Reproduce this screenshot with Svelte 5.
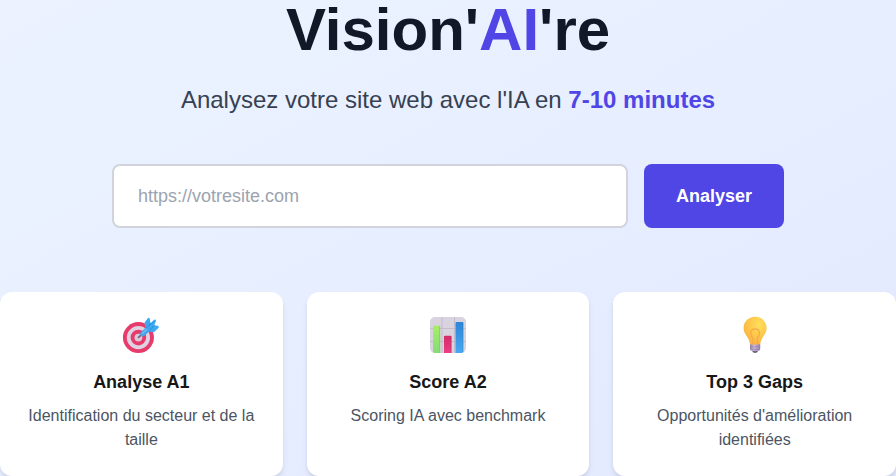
<script>
  const features = [
    { icon: 'target', title: 'Analyse A1', text: 'Identification du secteur et de la taille' },
    { icon: 'chart', title: 'Score A2', text: 'Scoring IA avec benchmark' },
    { icon: 'bulb', title: 'Top 3 Gaps', text: "Opportunités d'amélioration identifiées" }
  ];
  let url = $state('');
</script>

<main>
  <h1>Vision'<span>AI</span>'re</h1>
  <p class="lead">Analysez votre site web avec l'IA en <strong>7-10 minutes</strong></p>
  <form onsubmit={(e) => e.preventDefault()}>
    <input type="text" placeholder="https://votresite.com" bind:value={url} />
    <button type="submit">Analyser</button>
  </form>
  <section class="cards">
    {#each features as feature}
      <article>
        <div class="icon">
          {#if feature.icon === 'target'}
            <svg viewBox="0 0 40 40" width="40" height="40">
              <defs>
                <linearGradient id="dart" x1="0" y1="1" x2="1" y2="0">
                  <stop offset="0" stop-color="#4b9eea" /><stop offset="1" stop-color="#35b2f5" />
                </linearGradient>
              </defs>
              <circle cx="17.4" cy="21.6" r="15.5" fill="#e63b6b" />
              <circle cx="17.4" cy="21.6" r="11.6" fill="#e0d2e3" />
              <circle cx="17.4" cy="21.6" r="7.8" fill="#e63b6b" />
              <circle cx="17.4" cy="21.6" r="3.9" fill="#d9c8da" />
              <path d="M17.6 21.4 22 17" stroke="#72697c" stroke-width="1.8" stroke-linecap="round" />
              <path d="M19.6 16.6 24.5 11.7 23.6 7.4Q23.5 6.3 24.3 5.5L27 2.1Q28.4 1 28.8 2.7L29.6 7.2 33.1 3.8Q35.4 2.6 35 5L33.3 9.2 36.8 9.8Q38.8 10.5 37.4 11.9L33.7 15.4Q32.5 16.5 31 16L28.2 15.5 23.5 19.8Q21.5 21.4 19.8 19.7 18.2 18.2 19.6 16.6Z" fill="url(#dart)" />
              <path d="M25 12 33.5 5M28.5 14.7 33.2 9.2M28 9 29.3 7.2" stroke="#288cd8" stroke-width=".9" fill="none" />
              <path d="M21.2 17.6 25.5 13.5" stroke="#69c4fa" stroke-width="1.3" stroke-linecap="round" />
            </svg>
          {:else if feature.icon === 'chart'}
            <svg viewBox="0 0 40 40" width="40" height="40">
              <defs>
                <linearGradient id="green" x1="0" y1="0" x2="0" y2="1">
                  <stop offset="0" stop-color="#a5ef61" /><stop offset="1" stop-color="#85dc78" />
                </linearGradient>
                <linearGradient id="blue" x1="0" y1="0" x2="0" y2="1">
                  <stop offset="0" stop-color="#2c86d8" /><stop offset="1" stop-color="#48a9f4" />
                </linearGradient>
                <linearGradient id="pink" x1="0" y1="0" x2="0" y2="1">
                  <stop offset="0" stop-color="#d22c68" /><stop offset="1" stop-color="#ee3f83" />
                </linearGradient>
                <clipPath id="panel"><rect x="2" y="1" width="36" height="36" rx="5" /></clipPath>
              </defs>
              <g clip-path="url(#panel)">
                <rect x="2" y="1" width="36" height="36" fill="#d9d2df" />
                <path d="M2 12.5H38M2 25.5H38M14 1V38M26.5 1V38" stroke="#c4bccc" stroke-width="1" />
                <rect x="5" y="9.8" width="7" height="28" rx="1" fill="url(#green)" />
                <rect x="16" y="19.8" width="7.5" height="18" rx="1" fill="url(#pink)" />
                <rect x="27.5" y="6" width="7.8" height="32" rx="1" fill="url(#blue)" />
                <path d="M11.7 10.2V38" stroke="#75c957" stroke-width=".7" />
                <path d="M23.2 20.2V38M35 6.5V38" stroke="#374778" stroke-opacity=".3" stroke-width=".6" />
              </g>
            </svg>
          {:else}
            <svg viewBox="0 0 40 40" width="40" height="40">
              <defs>
                <radialGradient id="glass" cx=".66" cy=".28" r=".8">
                  <stop offset="0" stop-color="#ffdf5c" /><stop offset=".5" stop-color="#fdc84a" /><stop offset="1" stop-color="#f8b045" />
                </radialGradient>
                <linearGradient id="base">
                  <stop offset="0" stop-color="#9482a5" /><stop offset=".4" stop-color="#cbbbd8" /><stop offset="1" stop-color="#927daa" />
                </linearGradient>
              </defs>
              <path d="M16.8 34.5H23.4L22 36.6Q20 37.5 18.1 36.6Z" fill="#75617f" />
              <path d="M15 27.5H25.2V32.8Q25.2 35 22.8 35H17.5Q15 35 15 32.8Z" fill="url(#base)" />
              <path d="M15 30.4Q20 31.8 25.2 30.4M15.2 33Q20 34.4 25 33" stroke="#9985b0" stroke-width=".8" fill="none" />
              <path d="M20.1 .8C13.4 .8 8.6 5.8 8.6 12C8.6 17.6 12.4 20 14 24.2L14.8 27.2Q15.2 28.6 16.7 28.6H23.5Q25 28.6 25.4 27.2L26.2 24.2C27.8 20 31.6 17.6 31.6 12C31.6 5.8 26.8 .8 20.1 .8Z" fill="url(#glass)" />
              <path d="M17.8 28.3V22C14.1 18 15.5 12.9 20 12.9S26.3 18 22.4 22V28.3" fill="none" stroke="#f4a945" stroke-width="1.1" />
            </svg>
          {/if}
        </div>
        <h3>{feature.title}</h3>
        <p>{feature.text}</p>
      </article>
    {/each}
  </section>
</main>

<style>
  :global(body) { margin: 0; overflow: hidden; }
  main {
    box-sizing: border-box;
    height: 476px;
    background: linear-gradient(to bottom right, #ecf3ff, #e2e9ff);
    font-family: "Liberation Sans", Arial, sans-serif;
    text-align: center;
    color: #171717;
  }
  h1, h3, p { margin: 0; }
  h1 { font-size: 60px; line-height: 60px; font-weight: 700; color: #111827; margin-bottom: 24px; }
  h1 span, .lead strong { color: #4f46e5; }
  .lead { font-size: 24px; line-height: 32px; color: #374151; margin-bottom: 48px; }
  form { display: flex; gap: 16px; width: 672px; margin: 0 auto 64px; }
  input {
    box-sizing: border-box;
    flex: 1;
    min-width: 0;
    height: 64px;
    padding: 16px 24px;
    border: 2px solid #d1d5db;
    border-radius: 8px;
    background: #fff;
    font: 18px/28px "Liberation Sans", Arial, sans-serif;
    color: #111827;
    outline: none;
  }
  input::placeholder { color: #9ca3af; opacity: 1; }
  button {
    padding: 16px 32px;
    border: 0;
    border-radius: 8px;
    background: #4f46e5;
    color: #fff;
    font: 700 18px/28px "Liberation Sans", Arial, sans-serif;
  }
  .cards { display: grid; grid-template-columns: repeat(3, 1fr); gap: 24px; }
  article {
    box-sizing: border-box;
    height: 184px;
    padding: 24px;
    border-radius: 12px;
    background: #fff;
    box-shadow: 0 4px 6px -1px rgba(0, 0, 0, .1), 0 2px 4px -2px rgba(0, 0, 0, .1);
  }
  .icon { height: 40px; margin-bottom: 12px; }
  svg { display: block; margin: 0 auto; }
  h3 { font-size: 18px; line-height: 28px; font-weight: 700; margin-bottom: 8px; }
  article p { font-size: 16px; line-height: 24px; color: #4b5563; }
</style>
